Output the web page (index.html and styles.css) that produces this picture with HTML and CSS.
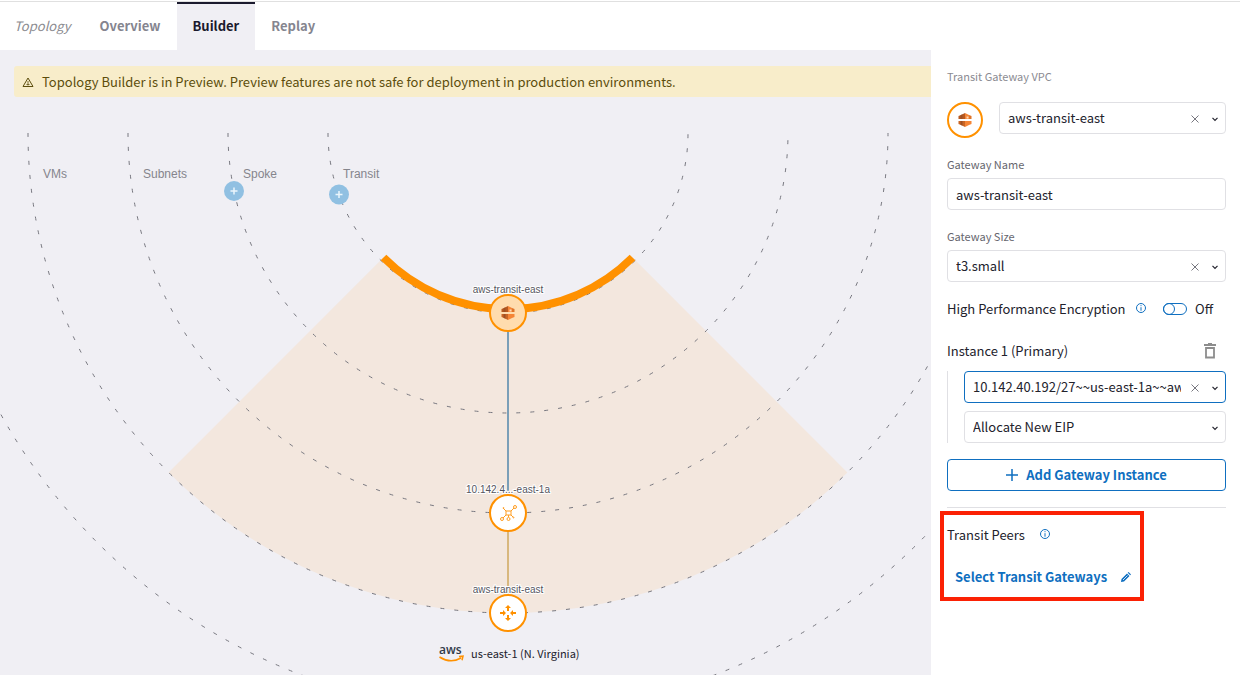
FILE: index.html
```html
<!DOCTYPE html>
<html lang="en">
<head>
<meta charset="utf-8">
<title>Topology Builder</title>
<link rel="stylesheet" href="styles.css">
</head>
<body>
<svg class="defs" width="0" height="0" aria-hidden="true">
  <symbol id="vpc" viewBox="0 0 14 14">
    <path d="M3 2 7 0v6H.5V3z" fill="#b8591f"/>
    <path d="M7 0l4 2v4H7z" fill="#f58536"/>
    <path d="M11 2l2.500 1v3H11z" fill="#e07428"/>
    <path d="M2.500 2.200 4.500 1.200V6h-2z" fill="#9d5025"/>
    <path d="M8.500 3.500h2v2h-2z" fill="#fbd9b8"/>
    <path d="M.5 8H7v6l-4-2-2.500-1z" fill="#c96524"/>
    <path d="M7 8h6.500v3L11 12l-4 2z" fill="#f58536"/>
    <path d="M2.500 8h2v4.700l-2-1z" fill="#9d5025"/>
  </symbol>
  <symbol id="chevron" viewBox="0 0 8 8"><path d="M1.500 2.800 4 5.300l2.500-2.500" fill="none" stroke="#22222c" stroke-width="1.200"/></symbol>
  <symbol id="cross" viewBox="0 0 8 8"><path d="M.5.5l7 7M7.500.5l-7 7" fill="none" stroke="#77777f" stroke-width="1"/></symbol>
  <symbol id="info" viewBox="0 0 12 12"><circle cx="6" cy="6" r="4.500" fill="none" stroke="#0f6fc0"/><path d="M6 3.200v1M6 5.200v3.500" stroke="#0f6fc0" stroke-width="1"/></symbol>
</svg>

<header class="topbar">
  <h1 class="title">Topology</h1>
  <nav class="tabs">
    <a class="tab" href="#overview">Overview</a>
    <a class="tab tab-active" href="#builder" aria-current="page">Builder</a>
    <a class="tab" href="#replay">Replay</a>
  </nav>
</header>

<main class="workspace">
  <section class="canvas" aria-label="Topology map">
    <svg class="map">
      <path class="wedge" d="M380.700 210.300A180 180 0 0 0 635.300 210.300L847.400 422.400A480 480 0 0 1 168.600 422.400Z"/>
      <g class="rings">
        <path d="M328 83a180 180 0 0 0 360 0"/>
        <path d="M228 83a280 280 0 0 0 560 0"/>
        <path d="M128 83a380 380 0 0 0 760 0"/>
        <path d="M28 83a480 480 0 0 0 960 0"/>
        <path d="M-72 83a580 580 0 0 0 1160 0"/>
      </g>
      <path class="band" d="M383.500 207.500A176 176 0 0 0 632.500 207.500"/>
      <g class="ring-names">
        <text x="43" y="128">VMs</text>
        <text x="143" y="128">Subnets</text>
        <text x="243" y="128">Spoke</text>
        <text x="343" y="128">Transit</text>
      </g>
      <g class="adders">
        <circle cx="234" cy="141" r="10"/><path d="M234 137.500v7M230.500 141h7"/>
        <circle cx="339" cy="144.500" r="10"/><path d="M339 141v7M335.500 144.500h7"/>
      </g>
      <path class="link-blue" d="M508 281v164"/>
      <path class="link-tan" d="M508 481v64"/>
      <g class="node-names">
        <text x="508" y="243">aws-transit-east</text>
        <text x="508" y="443">10.142.4...-east-1a</text>
        <text x="508" y="543">aws-transit-east</text>
      </g>
      <g class="nodes">
        <circle class="node-selected" cx="508" cy="263" r="18"/>
        <circle cx="508" cy="463" r="18"/>
        <circle cx="508" cy="563" r="18"/>
      </g>
      <use href="#vpc" x="501" y="256" width="14" height="14"/>
      <g class="instance-icon">
        <rect x="506" y="461" width="5" height="4"/>
        <path d="M511 461l3-3M506 461l-3-3M506 465l-3 3M511 465l2 2M508.500 465v2"/>
        <circle cx="515" cy="457" r="1.500"/><circle cx="502" cy="469" r="1.500"/><circle cx="508.500" cy="469" r="1.500"/>
        <circle cx="503.500" cy="458" r=".5"/><circle cx="513.500" cy="467.500" r=".5"/>
      </g>
      <g class="gateway-icon">
        <path d="M508 555l3 3h-2v3h-2v-3h-2zM508 571l3-3h-2v-3h-2v3h-2zM500 562h3v-2l3 3-3 3v-2h-3zM516 562h-3v-2l-3 3 3 3v-2h3z"/>
      </g>
      <text class="aws-word" x="439" y="604">aws</text>
      <path class="aws-smile" d="M439.500 607q11 7 21.500 1M459 606.500l4-.3-1 4"/>
      <text class="region" x="471" y="608">us-east-1 (N. Virginia)</text>
    </svg>
    <div class="banner" role="status">
      <svg class="banner-icon" viewBox="0 0 12 12"><path d="M6 2 11 10.500H1z" fill="none" stroke="#5c4d0c"/><path d="M6 5v3M6 8.500v1M4.500 8.500h3" stroke="#5c4d0c" stroke-width=".8"/></svg>
      <span>Topology Builder is in Preview. Preview features are not safe for deployment in production environments.</span>
    </div>
  </section>

  <aside class="panel">
    <label class="label label-muted" for="vpc-select">Transit Gateway VPC</label>
    <div class="vpc-row">
      <span class="vpc-badge"><svg width="14" height="14"><use href="#vpc"/></svg></span>
      <div class="field">
        <select class="control" id="vpc-select"><option>aws-transit-east</option></select>
        <button class="clear" aria-label="Clear VPC"><svg width="8" height="8"><use href="#cross"/></svg></button>
        <svg class="chevron"><use href="#chevron"/></svg>
      </div>
    </div>

    <label class="label" for="gw-name">Gateway Name</label>
    <input class="control" id="gw-name" type="text" value="aws-transit-east">

    <label class="label" for="gw-size">Gateway Size</label>
    <div class="field">
      <select class="control" id="gw-size"><option>t3.small</option></select>
      <button class="clear" aria-label="Clear size"><svg width="8" height="8"><use href="#cross"/></svg></button>
      <svg class="chevron"><use href="#chevron"/></svg>
    </div>

    <div class="encryption">
      <label class="encryption-label" for="hpe">High Performance Encryption</label>
      <svg class="info"><use href="#info"/></svg>
      <input class="switch" id="hpe" type="checkbox" role="switch">
      <span>Off</span>
    </div>

    <div class="instance-head">
      <span>Instance 1 (Primary)</span>
      <button class="trash" aria-label="Delete instance"><svg width="12" height="16" viewBox="0 0 12 16"><path d="M0 2h12M4 1h4" stroke="#8d8d8d" stroke-width="2"/><path d="M2 5h8v9.500H2z" fill="none" stroke="#8d8d8d" stroke-width="1.800"/></svg></button>
    </div>
    <div class="instance-body">
      <div class="field">
        <select class="control control-focus" aria-label="Subnet"><option>10.142.40.192/27~~us-east-1a~~aws-transit-east</option></select>
        <button class="clear" aria-label="Clear subnet"><svg width="8" height="8"><use href="#cross"/></svg></button>
        <svg class="chevron"><use href="#chevron"/></svg>
      </div>
      <div class="field">
        <select class="control" aria-label="Elastic IP"><option>Allocate New EIP</option></select>
        <svg class="chevron"><use href="#chevron"/></svg>
      </div>
    </div>

    <button class="add"><svg width="12" height="12" viewBox="0 0 12 12"><path d="M6 0v12M0 6h12" stroke="#0f6fc0" stroke-width="1.500"/></svg>Add Gateway Instance</button>

    <section class="peers">
      <div class="peers-head"><span>Transit Peers</span><svg class="info"><use href="#info"/></svg></div>
      <button class="peers-select">Select Transit Gateways
        <svg width="10" height="10" viewBox="0 0 10 10"><path d="M0 10l.5-3L6 1.500 8.500 4 3 9.500z M6.700.8 7.500 0Q8 0 10 2.500L9.200 3.300z" fill="#0f6fc0"/><path d="M2 8l4.500-4.500" stroke="#fff" stroke-width=".8"/></svg>
      </button>
    </section>
  </aside>
</main>
</body>
</html>
```
FILE: styles.css
```css
*, *::before, *::after { box-sizing: border-box; }

body {
  margin: 0;
  min-height: 100vh;
  display: flex;
  flex-direction: column;
  background: #fff;
  color: #22222c;
  font: 13px/20px "Noto Sans CJK SC", "Open Sans", sans-serif;
}

button, input, select { font: inherit; color: inherit; margin: 0; }
button { background: none; border: 0; padding: 0; cursor: pointer; }
svg { display: block; flex: none; }
.defs { position: absolute; }

.topbar {
  display: flex;
  height: 50px;
  padding-top: 1px;
}
.topbar::before {
  content: "";
  position: absolute;
  left: 0;
  right: 0;
  top: 1px;
  height: 1px;
  background: #e0e0e0;
}
.title {
  margin: 0;
  padding: 0 13px 0 14px;
  font-size: 13px;
  font-weight: 400;
  font-style: italic;
  line-height: 50px;
  color: #8b8b90;
}
.tabs { display: flex; }
.tab {
  position: relative;
  margin-top: 1px;
  padding: 0 16px;
  border-top: 2px solid transparent;
  line-height: 44px;
  font-weight: 700;
  color: #85858f;
  text-decoration: none;
}
.tab-active { background: #f0eff4; border-color: #1b1a2e; color: #1b1a2e; }

.workspace {
  flex: 1;
  display: grid;
  grid-template-columns: minmax(0, 1fr) 309px;
}

.canvas {
  position: relative;
  overflow: hidden;
  padding: 16px 0 0 14px;
  background: #f0eff4;
}
.banner {
  position: relative;
  display: flex;
  align-items: center;
  gap: 8px;
  padding: 6px 8px 5px;
  border-radius: 3px 0 0 3px;
  background: #f8edca;
  color: #5c4d0c;
}
.banner-icon { width: 12px; height: 12px; }
.map {
  position: absolute;
  left: 0;
  top: 0;
  width: 100%;
  height: 100%;
}
.wedge { fill: #f3e7de; }
.band { fill: none; stroke: #ff9100; stroke-width: 8; }
.rings { fill: none; stroke: #77777f; stroke-width: 1; stroke-dasharray: 4 10; }
.ring-names { font: 12px "Liberation Sans", sans-serif; fill: #85858c; }
.adders circle { fill: #90c0e2; }
.adders path { stroke: #eaf5fc; stroke-width: 1.5; }
.link-blue { stroke: #7a9fb8; stroke-width: 2; }
.link-tan { stroke: #d8b87e; stroke-width: 2; }
.node-names {
  font: 10px "Liberation Sans", sans-serif;
  fill: #55555e;
  text-anchor: middle;
  stroke: #fff;
  stroke-width: 2;
  paint-order: stroke;
}
.nodes circle { fill: #fff; stroke: #ff9100; stroke-width: 2; }
.nodes .node-selected { fill: #ffdcae; }
.instance-icon { fill: none; stroke: #ff9e22; stroke-width: 1; }
.gateway-icon { fill: #ff9100; }
.aws-word { font: 600 12px "Open Sans", sans-serif; fill: #303a48; }
.aws-smile { fill: none; stroke: #ff9100; stroke-width: 1.5; }
.region { font-size: 11px; fill: #22222c; }

.panel {
  display: flex;
  flex-direction: column;
  padding: 18px 14px 18px 16px;
}
.label {
  margin: 18px 0 6px;
  font-size: 11px;
  line-height: 16px;
  color: #66666e;
}
.label-muted { margin: 0 0 18px; color: #8b8b92; }
.vpc-row { display: flex; gap: 16px; height: 36px; }
.vpc-badge {
  display: grid;
  place-items: center;
  flex: none;
  width: 36px;
  border: 2px solid #ff9100;
  border-radius: 50%;
}
.field { position: relative; flex: 1 1 auto; min-width: 0; }
.panel > .field { flex: none; }
.control {
  display: block;
  width: 100%;
  height: 32px;
  padding: 0 44px 0 8px;
  border: 1px solid #e0e0e4;
  border-radius: 4px;
  outline: none;
  background: #fff;
  appearance: none;
  line-height: 20px;
}
.control-focus { border-color: #0f6fc0; }
.clear { position: absolute; right: 27px; top: 13px; }
.chevron {
  position: absolute;
  right: 7px;
  top: 13px;
  width: 8px;
  height: 8px;
  pointer-events: none;
}
.info { width: 12px; height: 12px; }

.encryption { display: flex; margin-top: 17px; padding-right: 13px; }
.encryption-label { flex: 1; white-space: nowrap; }
.encryption .info { margin: 3px 16px 0 0; }
.switch {
  appearance: none;
  position: relative;
  width: 24px;
  height: 12px;
  margin: 4px 8px 0 0;
  border: 1px solid #0f6fc0;
  border-radius: 6px;
}
.switch::before {
  content: "";
  position: absolute;
  left: -1px;
  top: -1px;
  width: 12px;
  height: 12px;
  border: 1px solid #0f6fc0;
  border-radius: 50%;
}

.instance-head {
  display: flex;
  justify-content: space-between;
  align-items: center;
  margin-top: 22px;
  padding-right: 10px;
}
.instance-body {
  display: grid;
  gap: 8px;
  margin-top: 10px;
  padding-left: 16px;
  border-left: 1px solid #e0e0e4;
}

.add {
  display: flex;
  align-items: center;
  justify-content: center;
  gap: 8px;
  height: 32px;
  margin-top: 16px;
  border: 1px solid #0f6fc0;
  border-radius: 4px;
  font-weight: 700;
  color: #0f6fc0;
}

.peers {
  position: relative;
  margin-top: 16px;
  padding-top: 17px;
  border-top: 1px solid #e0e0e4;
}
.peers::after {
  content: "";
  position: absolute;
  left: -7px;
  top: 3px;
  width: 204px;
  height: 90px;
  border: 4px solid #fb2104;
  pointer-events: none;
}
.peers-head { display: flex; gap: 14px; }
.peers-head .info { margin-top: 3px; }
.peers-select {
  display: flex;
  align-items: center;
  gap: 14px;
  margin: 22px 0 0 8px;
  font-weight: 700;
  color: #0f6fc0;
}
```
